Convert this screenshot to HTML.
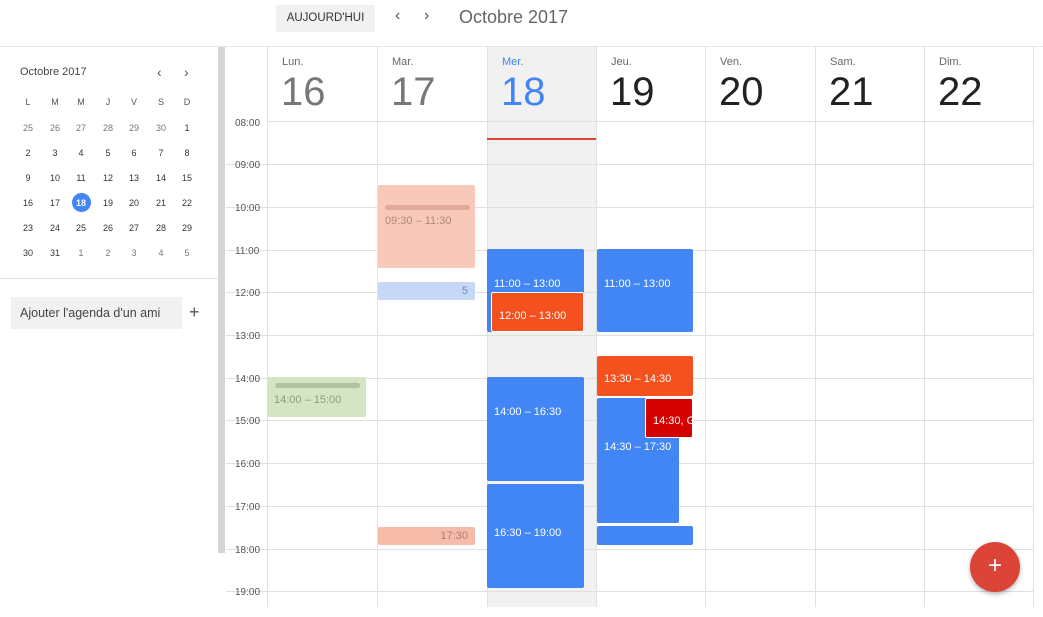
<!DOCTYPE html>
<html><head><meta charset="utf-8"><style>
*{margin:0;padding:0;box-sizing:border-box}
body{width:1043px;height:617px;background:#fff;font-family:"Liberation Sans",sans-serif;position:relative;overflow:hidden;color:#333}
.a{position:absolute}
.vl{position:absolute;top:47px;height:560px;width:1px;background:#e0e0e0}
.hl{position:absolute;left:226px;width:807px;height:1px;background:#e0e0e0}
.t{position:absolute;left:235px;font-size:10px;color:#555}
.dn{position:absolute;top:56px;font-size:11px;color:#666}
.dd{position:absolute;top:70px;font-size:40px;color:#222}
.ev{position:absolute;border-radius:2px;color:#fff;font-size:11px;padding:0 7px;overflow:hidden}
.mc{position:absolute;font-size:9px;color:#333;width:20px;text-align:center}
</style></head><body>
<div class="a" style="left:276px;top:5px;width:99px;height:27px;background:#f1f1f1;font-size:11.5px;color:#333;text-align:center;line-height:27px">AUJOURD'HUI</div>
<div class="a" style="left:395px;top:7px;font-size:16px;color:#555">&#8249;</div>
<div class="a" style="left:424px;top:7px;font-size:16px;color:#555">&#8250;</div>
<div class="a" style="left:459px;top:7px;font-size:18px;color:#666">Octobre 2017</div>
<div class="a" style="left:0;top:46px;width:1043px;height:1px;background:#e6e6e6"></div>
<div class="a" style="left:20px;top:66px;font-size:11px;color:#444">Octobre 2017</div>
<div class="a" style="left:157px;top:64px;font-size:14px;color:#555">&#8249;</div>
<div class="a" style="left:184px;top:64px;font-size:14px;color:#555">&#8250;</div>
<div id="mini"></div>
<div class="a" style="left:0;top:278px;width:218px;height:1px;background:#e0e0e0"></div>
<div class="a" style="left:11px;top:297px;width:171px;height:32px;background:#f1f1f1;font-size:12.5px;color:#444;padding-left:9px;line-height:32px">Ajouter l'agenda d'un ami</div>
<div class="a" style="left:189px;top:302px;font-size:18px;color:#555">+</div>
<div class="a" style="left:218px;top:47px;width:7px;height:506px;background:#d6d6d6"></div>
<div class="a" style="left:487px;top:47px;width:109px;height:560px;background:#f1f1f1"></div>
<div id="grid"></div>
<div class="a" style="left:487px;top:138px;width:109px;height:2px;background:#db4437"></div>
<div class="ev" style="left:378px;top:185px;width:97px;height:83px;background:#f8c8b8;color:#b08878;padding-top:30px">09:30 – 11:30</div>
<div class="a" style="left:385px;top:205px;width:85px;height:5px;background:rgba(200,140,120,.5);border-radius:3px"></div>
<div class="ev" style="left:378px;top:282px;width:97px;height:18px;background:#c6d8f6;color:#6d8fc8;text-align:right;line-height:18px">5</div>
<div class="ev" style="left:378px;top:527px;width:97px;height:18px;background:#f6bba9;color:#b07d6c;text-align:right;line-height:18px">17:30</div>
<div class="ev" style="left:267px;top:377px;width:99px;height:40px;background:#d4e5c4;color:#8a9d7a;padding-top:17px">14:00 – 15:00</div>
<div class="a" style="left:275px;top:383px;width:85px;height:5px;background:rgba(140,160,120,.5);border-radius:3px"></div>
<div class="ev" style="left:487px;top:249px;width:97px;height:83px;background:#4285f4;padding-top:29px">11:00 – 13:00</div>
<div class="ev" style="left:491px;top:292px;width:93px;height:40px;background:#f4511e;padding-top:17px;border:1px solid #fff">12:00 – 13:00</div>
<div class="ev" style="left:487px;top:377px;width:97px;height:104px;background:#4285f4;padding-top:29px">14:00 – 16:30</div>
<div class="ev" style="left:487px;top:484px;width:97px;height:104px;background:#4285f4;padding-top:43px">16:30 – 19:00</div>
<div class="ev" style="left:597px;top:249px;width:96px;height:83px;background:#4285f4;padding-top:29px">11:00 – 13:00</div>
<div class="ev" style="left:597px;top:356px;width:96px;height:40px;background:#f4511e;padding-top:17px">13:30 – 14:30</div>
<div class="ev" style="left:597px;top:398px;width:82px;height:125px;background:#4285f4;padding-top:43px">14:30 – 17:30</div>
<div class="ev" style="left:645px;top:398px;width:48px;height:40px;background:#d50000;padding:16px 0 0 7px;border:1px solid #fff;white-space:nowrap">14:30, Go</div>
<div class="ev" style="left:597px;top:526px;width:96px;height:19px;background:#4285f4"></div>
<div class="a" style="left:970px;top:542px;width:50px;height:50px;border-radius:50%;background:#db4437;box-shadow:0 2px 5px rgba(0,0,0,.3);color:#fff;font-size:24px;text-align:center;line-height:48px">+</div>
<script>
var g='';
var xs=[267,377,487,596,705,815,924,1033];
xs.forEach(function(x){g+='<div class="vl" style="left:'+x+'px"></div>'});
g+='<div class="hl" style="top:121px;left:267px;width:766px"></div>';
for(var h=8;h<=19;h++){var y=Math.round(121.5+(h-8)*42.7);if(h>8)g+='<div class="hl" style="top:'+y+'px"></div>';g+='<div class="t" style="top:'+(y-4)+'px">'+(h<10?'0':'')+h+':00</div>';}
var dn=['Lun.','Mar.','Mer.','Jeu.','Ven.','Sam.','Dim.'];
for(var i=0;i<7;i++){var c=i<2?'#777':(i==2?'#4285f4':'#222');g+='<div class="dn" style="left:'+(xs[i]+15)+'px;color:'+(i==2?'#4285f4':'#666')+'">'+dn[i]+'</div><div class="dd" style="left:'+(xs[i]+14)+'px;color:'+c+'">'+(16+i)+'</div>';}
document.getElementById('grid').innerHTML=g;
var m='';var L=['L','M','M','J','V','S','D'];var cx=[28,55,81,108,134,161,187];
L.forEach(function(l,i){m+='<div class="mc" style="left:'+(cx[i]-10)+'px;top:97px;color:#555">'+l+'</div>'});
var d=[25,26,27,28,29,30,1];for(var r=0;r<6;r++){for(var k=0;k<7;k++){var v=r==0?d[k]:(r*7+k-5);var o=false;if(r==0&&k<6)o=true;if(v>31){v-=31;o=true}
var y=123+r*25;
if(v==18&&!o)m+='<div class="a" style="left:'+(cx[k]-9)+'px;top:'+(y-5)+'px;width:19px;height:19px;border-radius:50%;background:#4285f4"></div><div class="mc" style="left:'+(cx[k]-10)+'px;top:'+y+'px;color:#fff;font-weight:bold">18</div>';
else m+='<div class="mc" style="left:'+(cx[k]-10)+'px;top:'+y+'px;color:'+(o?'#777':'#333')+'">'+v+'</div>';}}
document.getElementById('mini').innerHTML=m;
</script>
</body></html>
